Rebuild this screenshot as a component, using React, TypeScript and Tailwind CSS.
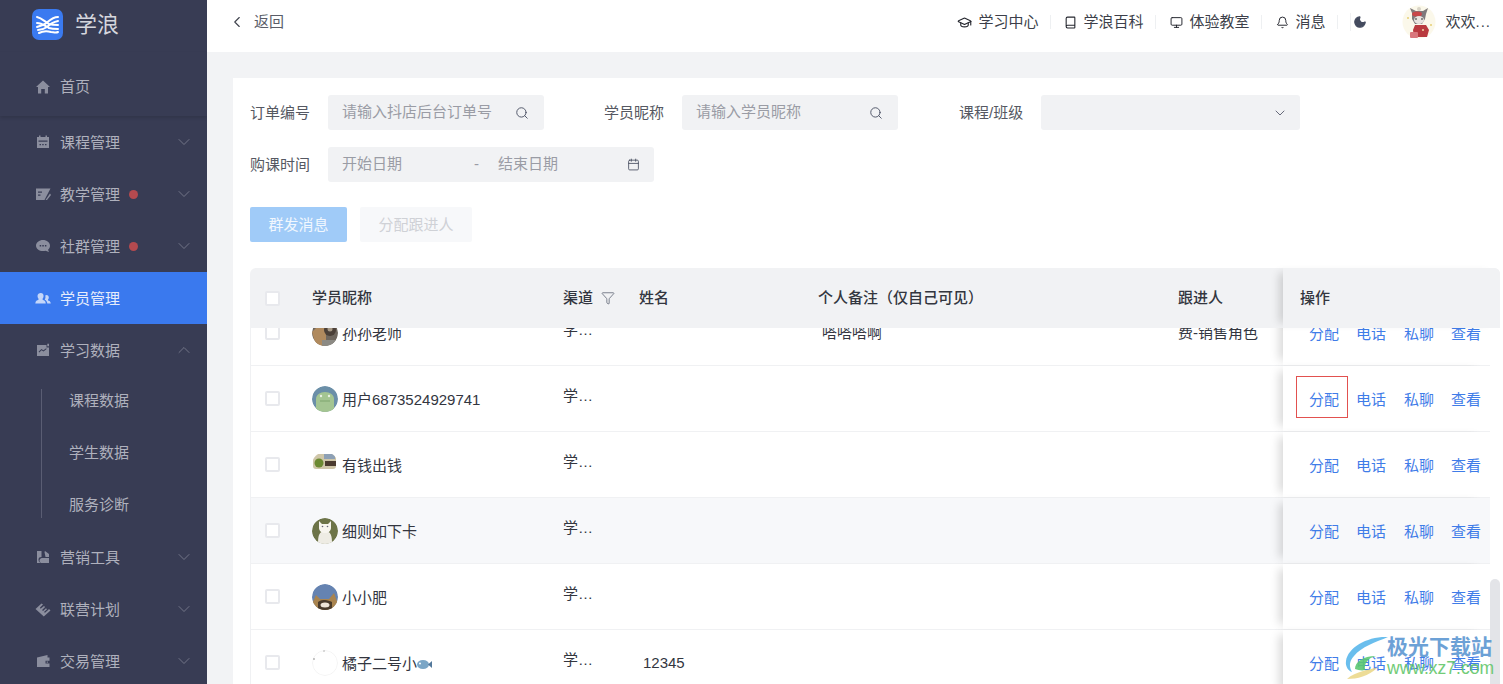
import React from "react";
import { ChevronDown, ChevronUp, ChevronLeft, Search, Calendar, GraduationCap, Book, Monitor, Bell, Moon, Filter } from "lucide-react";

const font = "font-['Liberation_Sans','Noto_Sans_CJK_SC',sans-serif]";

const Logo = () => (
  <svg width="31" height="31" viewBox="0 0 31 31">
    <rect width="31" height="31" rx="7" fill="#3a7af0" />
    <g fill="none" stroke="#fff" strokeWidth="2" strokeLinecap="round">
      <path d="M5 8c5 1 8 5 12 7 3 1 6 1 9 1" />
      <path d="M5 14c5 0 8 3 12 5 3 1 6 1 9 1" />
      <path d="M7 24c4-2 8-2 12-1 2 0 5 1 7 0" />
      <path d="M26 8c-6 0-9 4-13 7-2 1-5 2-8 3" />
      <path d="M26 12c-5 1-8 3-11 6-3 2-6 3-9 3" />
    </g>
  </svg>
);

type IconP = { d: React.ReactNode };
const SideIcon = ({ d }: IconP) => (
  <svg width="16" height="16" viewBox="0 0 16 16" fill="#8b8e9e" className="shrink-0">{d}</svg>
);

const icons: Record<string, React.ReactNode> = {
  home: <path d="M8 1.500 15 8h-2v6.500H9.800V10H6.200v4.500H3V8H1z" />,
  course: <path fillRule="evenodd" d="M4 1.500h1.500V3h5V1.500H12V3h2v11H2V3h2zM3.500 6.500v1.200h9V6.500zM4.500 10h1.500v1.200H4.500zM7.200 10h1.500v1.200H7.200zM10 10h1.500v1.200H10z" />,
  teach: <path fillRule="evenodd" d="M1 2.500h14.500l-5 9.500-1 2H1zM3 5.500v1.300h4V5.500zM3 8.500v1.300h2.500V8.500zM15 7.500 16 9l-4 5h-1.500z" />,
  group: <path fillRule="evenodd" d="M8 2c3.800 0 7 2.500 7 5.800 0 1.700-.8 3-2 4l1 2.200-3.500-1.200c-.8.200-1.600.3-2.500.3-3.900 0-7-2.300-7-5.300C1 4.500 4.200 2 8 2zM4.700 7v1.500h1.500V7zM7.300 7v1.500h1.500V7zM9.900 7v1.500h1.500V7z" />,
  student: <path d="M5.800 3c1.700 0 2.800 1.300 2.800 3 0 1-.4 2-1 2.700v1c1.500.5 3 1 3.200 3.800H.3c.2-2.800 1.700-3.300 3.200-3.800v-1c-.6-.7-1-1.700-1-2.700 0-1.700 1.600-3 3.300-3zM11.500 5c1.400 0 2.300 1 2.300 2.500 0 .9-.3 1.600-.8 2.100v.8c1.300.4 2.600.8 2.800 3.100h-3.500c-.2-1.800-1-3-2.500-3.700v-.4c.5-.8.700-1.500.7-2.200 0-.7-.2-1.200-.3-1.700.5-.3 1-.5 1.300-.5z" />,
  data: <path fillRule="evenodd" d="M2 3h9.500v2.500H14V14H2zM12.300 1.800h1.700v2.400h-1.700zM4.300 10.500l2.200-2.200 2 1.300 3.200-2.600-.6-.8-2.700 2.100-2-1.300-2.800 2.700z" />,
  market: <path fillRule="evenodd" d="M2 2h4.500v6c-1.800 0-3 .8-3 2.500S4 13 5 13.500l.2.500H2zM10 2l4 3v3h-3.500L9.500 3zM7 9h7v5H6c-1-.5-1.500-1.500-1.500-2.500S5.500 9 7 9z" />,
  union: <path d="M.5 8 6.500 2.500l1.500 1-3 3 .5 1.200 3.500-2.700 1.100 1L7.100 9l.9.900 3-2.700 1 1-3 2.700 1 .8 2.800-2.500 1.200-1.200 1.500 1.500-6.700 6z" />,
  wallet: <path fillRule="evenodd" d="M2 4.500 12.500 2v2.500H14.500V14H2zM10.500 7.800v2.700h4V7.800zM11.700 8.600h1.200v1.100h-1.200z" />,
};

const Dot = () => <span className="ml-[9px] h-[9px] w-[9px] rounded-full bg-[#b44a4f]" />;

const MenuItem = ({ icon, label, dot, open, arrow = true }: { icon: string; label: string; dot?: boolean; open?: boolean; arrow?: boolean }) => (
  <div className="flex h-[52px] shrink-0 items-center pl-[35px] pr-[13px] text-[15px] text-[#afb1bd]">
    <SideIcon d={icons[icon]} />
    <span className="ml-[9px] pt-[2px]">{label}</span>
    {dot && <Dot />}
    <span className="flex-1" />
    {arrow && (open ? <ChevronUp size={20} strokeWidth={1} color="#7d8092" /> : <ChevronDown size={20} strokeWidth={1} color="#7d8092" />)}
  </div>
);

const Sidebar = () => (
  <aside className="flex h-[684px] w-[207px] shrink-0 flex-col overflow-hidden bg-[#383c54]">
    <div className="flex h-[52px] shrink-0 items-start pl-[32px] pt-[9px]">
      <Logo />
      <span className="ml-[12px] text-[22px] leading-[32px] text-[#d5d6dd]">学浪</span>
    </div>
    <div className="flex h-[64px] shrink-0 items-center pl-[35px] pt-[6px] text-[15px] text-[#afb1bd] shadow-[0_2px_3px_rgba(0,0,0,0.12)]">
      <SideIcon d={icons.home} />
      <span className="ml-[9px] pt-[1px]">首页</span>
    </div>
    <MenuItem icon="course" label="课程管理" />
    <MenuItem icon="teach" label="教学管理" dot />
    <MenuItem icon="group" label="社群管理" dot />
    <div className="flex h-[52px] shrink-0 items-center bg-[#3a79ee] pl-[35px] text-[15px] text-[#e6ecfb]">
      <svg width="16" height="16" viewBox="0 0 16 16" fill="#c4d6f9" className="shrink-0">{icons.student}</svg>
      <span className="ml-[9px] pt-[2px]">学员管理</span>
    </div>
    <MenuItem icon="data" label="学习数据" open />
    <div className="relative -mt-[2px] flex h-[157px] shrink-0 flex-col pl-[69px] text-[15px] text-[#afb1bd]">
      <span className="absolute left-[41px] top-[15px] h-[129px] w-px bg-[#5a5d73]" />
      <span className="flex h-[52px] items-center pt-[2px]">课程数据</span>
      <span className="flex h-[52px] items-center pt-[2px]">学生数据</span>
      <span className="flex h-[52px] items-center pt-[2px]">服务诊断</span>
    </div>
    <MenuItem icon="market" label="营销工具" />
    <MenuItem icon="union" label="联营计划" />
    <MenuItem icon="wallet" label="交易管理" />
  </aside>
);

const TopItem = ({ icon, label }: { icon: React.ReactNode; label: string }) => (
  <div className="flex items-center gap-[6px] text-[15px] text-[#3c3f4a]">
    <span className="text-[#24262e]">{icon}</span>
    <span>{label}</span>
  </div>
);

const Sep = ({ right }: { right: string }) => <span className={`ml-[12px] ${right} h-[14px] w-px bg-[#eef0f2]`} />;

const Kuromi = () => (
  <svg width="34" height="34" viewBox="0 0 34 34" className="shrink-0">
    <circle cx="17" cy="17" r="16.500" fill="#fbf8ea" />
    <circle cx="6" cy="13" r="1" fill="#e6cf74" />
    <circle cx="29" cy="20" r="1" fill="#e6cf74" />
    <path d="M10 8 8 3l6 3h7l5-3-2 6-1 5-3 5h-7l-3-5z" fill="#7f7a7c" />
    <ellipse cx="15" cy="9" rx="5" ry="2.500" fill="#c8474a" />
    <circle cx="17" cy="4" r="2" fill="#d9d4c6" />
    <ellipse cx="17" cy="15" rx="5" ry="4" fill="#e8e4e0" />
    <path d="M13 14h2M19 14h2" stroke="#333" strokeWidth="1" />
    <path d="M13 20h11l3 5-2 7H12l-1-7z" fill="#b93a3f" />
    <rect x="8" y="27" width="8" height="6" rx="1" fill="#d9777c" />
    <circle cx="21" cy="25" r="1" fill="#f1d7a5" />
  </svg>
);

const TopBar = () => (
  <header className="flex h-[52px] shrink-0 items-center bg-white pb-[8px] pr-[12px]">
    <ChevronLeft size={18} strokeWidth={1.5} className="ml-[21px] text-[#3f424d]" />
    <span className="ml-[8px] text-[15px] text-[#5a5d68]">返回</span>
    <span className="flex-1" />
    <TopItem icon={<GraduationCap size={15} strokeWidth={1.8} />} label="学习中心" />
    <Sep right="mr-[13px]" />
    <TopItem icon={<Book size={13} strokeWidth={2} />} label="学浪百科" />
    <Sep right="mr-[14px]" />
    <TopItem icon={<Monitor size={13} strokeWidth={1.8} />} label="体验教室" />
    <Sep right="mr-[14px]" />
    <TopItem icon={<Bell size={13} strokeWidth={1.8} />} label="消息" />
    <Sep right="mr-[12px]" />
    <span className="h-[18px] w-px bg-[#f0f1f3]" />
    <Moon size={14} fill="#444b5f" color="#444b5f" className="ml-[2px]" />
    <span className="w-[35px]" />
    <Kuromi />
    <span className="ml-[9px] text-[15px] text-[#3c3f4a]">欢欢<span className="tracking-[1px]">...</span></span>
  </header>
);

const Label = ({ children, w }: { children: React.ReactNode; w: string }) => (
  <span className={`${w} pt-[1px] text-[15px] text-[#555862]`}>{children}</span>
);

const Field = ({ text, w }: { text: string; w: string }) => (
  <div className={`${w} flex h-[35px] items-center justify-between rounded-[3px] bg-[#f1f2f4] pl-[14px] pr-[15px]`}>
    <span className="text-[15px] text-[#9a9ca5]">{text}</span>
    <Search size={14} strokeWidth={1.6} className="text-[#4a5163]" />
  </div>
);

const Filters = () => (
  <div className="flex flex-col pl-[17px] pt-[17px]">
    <div className="flex h-[35px] items-center">
      <Label w="w-[78px]">订单编号</Label>
      <Field text="请输入抖店后台订单号" w="w-[216px]" />
      <span className="w-[60px]" />
      <Label w="w-[78px]">学员昵称</Label>
      <Field text="请输入学员昵称" w="w-[216px]" />
      <span className="w-[61px]" />
      <Label w="w-[82px]">课程/班级</Label>
      <div className="flex h-[35px] w-[259px] items-center justify-end rounded-[3px] bg-[#f1f2f4] pr-[12px]">
        <ChevronDown size={16} strokeWidth={1.4} className="text-[#5c6070]" />
      </div>
    </div>
    <div className="mt-[17px] flex h-[35px] items-center">
      <Label w="w-[78px]">购课时间</Label>
      <div className="flex h-[35px] w-[326px] items-center rounded-[3px] bg-[#f1f2f4] pl-[14px] pr-[14px] text-[15px] text-[#9a9ca5]">
        <span className="w-[132px]">开始日期</span>
        <span className="w-[24px]">-</span>
        <span className="flex-1">结束日期</span>
        <Calendar size={13} strokeWidth={1.6} className="text-[#4a5163]" />
      </div>
    </div>
    <div className="mt-[25px] flex items-center gap-[13px]">
      <button className="h-[35px] w-[97px] rounded-[2px] bg-[#a0cbf8] pt-[1px] text-[15px] text-[#f1f7fe]">群发消息</button>
      <button className="h-[35px] w-[112px] rounded-[2px] bg-[#f7f8fa] pt-[1px] text-[15px] text-[#cfd1d6]">分配跟进人</button>
    </div>
  </div>
);

const Check = () => <span className="block h-[15px] w-[15px] rounded-[2px] border-2 border-[#e8e9ed] bg-white" />;

const Avatar = ({ kind }: { kind: number }) => {
  const inner: Record<number, React.ReactNode> = {
    0: (<><circle cx="13" cy="13" r="13" fill="#6f675e" /><path d="M0 12 8 4l6 5v17H4z" fill="#b08a5e" /><circle cx="18" cy="10" r="6" fill="#4b4038" /><circle cx="18" cy="9" r="2.500" fill="#a89a86" /><path d="M10 20h14v6H10z" fill="#8c8a84" /></>),
    1: (<><circle cx="13" cy="13" r="13" fill="#6b8fa8" /><path d="M4 26V13c0-4 4-7 9-7s9 3 9 7v13z" fill="#a4c592" /><circle cx="9" cy="10" r="1.200" fill="#e9f0e4" /><circle cx="17" cy="10" r="1.200" fill="#e9f0e4" /><path d="M8 15h10" stroke="#7ea56f" strokeWidth="1" /></>),
    2: (<><rect x="0" y="0" width="26" height="26" fill="#fff" /><rect x="1" y="2" width="23" height="15" rx="3" fill="#cfc6a8" /><circle cx="7" cy="11" r="4.500" fill="#6c8a32" /><rect x="12" y="2" width="11" height="5" fill="#8da0b5" /><rect x="13" y="9" width="11" height="5" fill="#4b3b2f" /></>),
    3: (<><circle cx="13" cy="13" r="13" fill="#6d7448" /><path d="M6 26c0-8 1-13 7-13s7 5 7 13z" fill="#eeece4" /><path d="M7 3l3 3h6l3-3v7c0 3-3 5-6 5s-6-2-6-5z" fill="#f7f5ef" /><circle cx="10.500" cy="8.500" r=".8" fill="#667" /><circle cx="15.500" cy="8.500" r=".8" fill="#667" /></>),
    4: (<><circle cx="13" cy="13" r="13" fill="#6583b1" /><path d="M0 20l4-9 4 4h9l5-6 4 11v6H0z" fill="#a9844f" /><path d="M6 18c3-2 5-2 7-2s5 1 7 2v8H6z" fill="#4a3b2a" /><ellipse cx="13" cy="21" rx="4.500" ry="2.500" fill="#eee4d6" /></>),
    5: (<><circle cx="13" cy="13" r="12.500" fill="#fff" stroke="#f4f4f4" /><circle cx="2" cy="9" r=".7" fill="#666" /><circle cx="12" cy="1" r=".7" fill="#999" /></>),
  };
  return (
    <svg width="26" height="26" viewBox="0 0 26 26" className="shrink-0 rounded-full">{inner[kind]}</svg>
  );
};

const Fish = () => (
  <svg width="15" height="11" viewBox="0 0 15 11" className="inline-block align-[-1px]">
    <ellipse cx="6" cy="5.500" rx="6" ry="4.500" fill="#7ba6c6" />
    <path d="M11 5.500 15 2v7z" fill="#53789b" />
    <circle cx="3" cy="4.500" r="1" fill="#fff" />
  </svg>
);

const Action = ({ children, w }: { children: React.ReactNode; w: string }) => (
  <span className={`${w} relative top-[2px] text-[15px] text-[#3f7ce8]`}>{children}</span>
);

type Row = { avatar: number; name: React.ReactNode; realName?: string; note?: string; owner?: string; hover?: boolean; marked?: boolean };

const rows: Row[] = [
  { avatar: 0, name: "孙孙老师", note: "嗒嗒嗒啊", owner: "费-销售角色" },
  { avatar: 1, name: "用户6873524929741", marked: true },
  { avatar: 2, name: "有钱出钱" },
  { avatar: 3, name: "细则如下卡", hover: true },
  { avatar: 4, name: "小小肥" },
  { avatar: 5, name: <>橘子二号小<Fish /></>, realName: "12345" },
];

const TableRow = ({ r, first }: { r: Row; first: boolean }) => (
  <div className={`flex h-[66px] shrink-0 items-stretch border-b border-[#f0f1f3] ${first ? "-mt-[28px]" : ""}`}>
    <div className={`flex flex-1 items-center border-l border-[#f0f1f3] text-[15px] text-[#33363f] ${r.hover ? "bg-[#f7f8fa]" : "bg-white"}`}>
      <span className="flex w-[61px] justify-start pl-[14px]"><Check /></span>
      <span className="flex w-[251px] items-center gap-[4px]">
        <Avatar kind={r.avatar} />
        <span className="relative top-[2px] whitespace-nowrap">{r.name}</span>
      </span>
      <span className="relative top-[-2px] w-[76px]">学…</span>
      <span className="w-[179px] pl-[4px] pt-[2px]">{r.realName}</span>
      <span className="w-[360px] pl-[4px] pt-[2px]">{r.note}</span>
      <span className="whitespace-nowrap pt-[2px]">{r.owner}</span>
    </div>
    <div className={`flex w-[207px] shrink-0 items-center pl-[26px] shadow-[-9px_0_9px_-5px_rgba(0,0,0,0.15)] ${r.hover ? "bg-[#f7f8fa]" : "bg-white"}`}>
      <div className="relative flex items-center">
        <Action w="w-[47px]">分配</Action>
        <Action w="w-[48px]">电话</Action>
        <Action w="w-[47px]">私聊</Action>
        <Action w="w-[30px]">查看</Action>
        {r.marked && <span className="absolute -left-[13px] -top-[11px] h-[42px] w-[52px] border border-[#e2514f]" />}
      </div>
    </div>
  </div>
);

const Table = () => (
  <div className="relative ml-[17px] mr-[3px] mt-[26px]">
    <div className="relative z-10 flex h-[60px] items-stretch rounded-t-[6px] bg-[#f1f2f4] text-[15px] font-medium text-[#33363f]">
      <div className="flex flex-1 items-center">
        <span className="flex w-[62px] pl-[15px]"><Check /></span>
        <span className="w-[251px]">学员昵称</span>
        <span className="flex w-[76px] items-center gap-[8px]">渠道<Filter size={14} strokeWidth={1.2} className="text-[#4a5163]" /></span>
        <span className="w-[179px]">姓名</span>
        <span className="w-[360px]">个人备注（仅自己可见）</span>
        <span>跟进人</span>
      </div>
      <div className="flex w-[217px] shrink-0 items-center rounded-tr-[6px] bg-[#f1f2f4] pl-[17px] shadow-[-9px_0_9px_-5px_rgba(0,0,0,0.15)]">操作</div>
    </div>
    <div className="flex h-[356px] flex-col overflow-hidden pr-[10px]">
      {rows.map((r, i) => <TableRow key={i} r={r} first={i === 0} />)}
    </div>
    <span className="absolute bottom-0 right-0 z-20 h-[105px] w-[10px] rounded-t-[5px] bg-[#e3e4e8]" />
  </div>
);

const Watermark = () => (
  <div className="absolute bottom-0 right-[9px] z-30 flex h-[52px] items-center opacity-90">
    <svg width="46" height="46" viewBox="0 0 46 46" className="shrink-0">
      <path d="M45 2C25 1 5 12 3 26c-1 6 3 10 6 11-3-5-3-11 2-16C18 12 33 7 45 2z" fill="#5ab8ec" />
      <path d="M12 34c0-7 8-13 21-13-8 2-12 7-11 14-3 1-7 0-10-1z" fill="#5bc873" />
      <path d="M4 44c10 0 22-3 30-11-4 0-9 2-14 3-6 2-12 4-16 8z" fill="#ecd98c" />
    </svg>
    <div className="-ml-[2px] -mt-[4px] flex flex-col leading-none">
      <span className="text-[21px] font-bold leading-[25px] text-[#5d97d2]">极光下载站</span>
      <span className="text-[17.500px] leading-[19px] text-[#63c76a]">www.xz7.com</span>
    </div>
  </div>
);

export default function App() {
  return (
    <div className={`relative flex h-[684px] w-[1503px] overflow-hidden bg-[#f2f3f5] ${font}`}>
      <Sidebar />
      <main className="flex h-[684px] min-w-0 flex-1 flex-col overflow-hidden">
        <TopBar />
        <div className="ml-[26px] mt-[26px] flex-1 overflow-hidden bg-white">
          <Filters />
          <Table />
        </div>
      </main>
      <Watermark />
    </div>
  );
}
